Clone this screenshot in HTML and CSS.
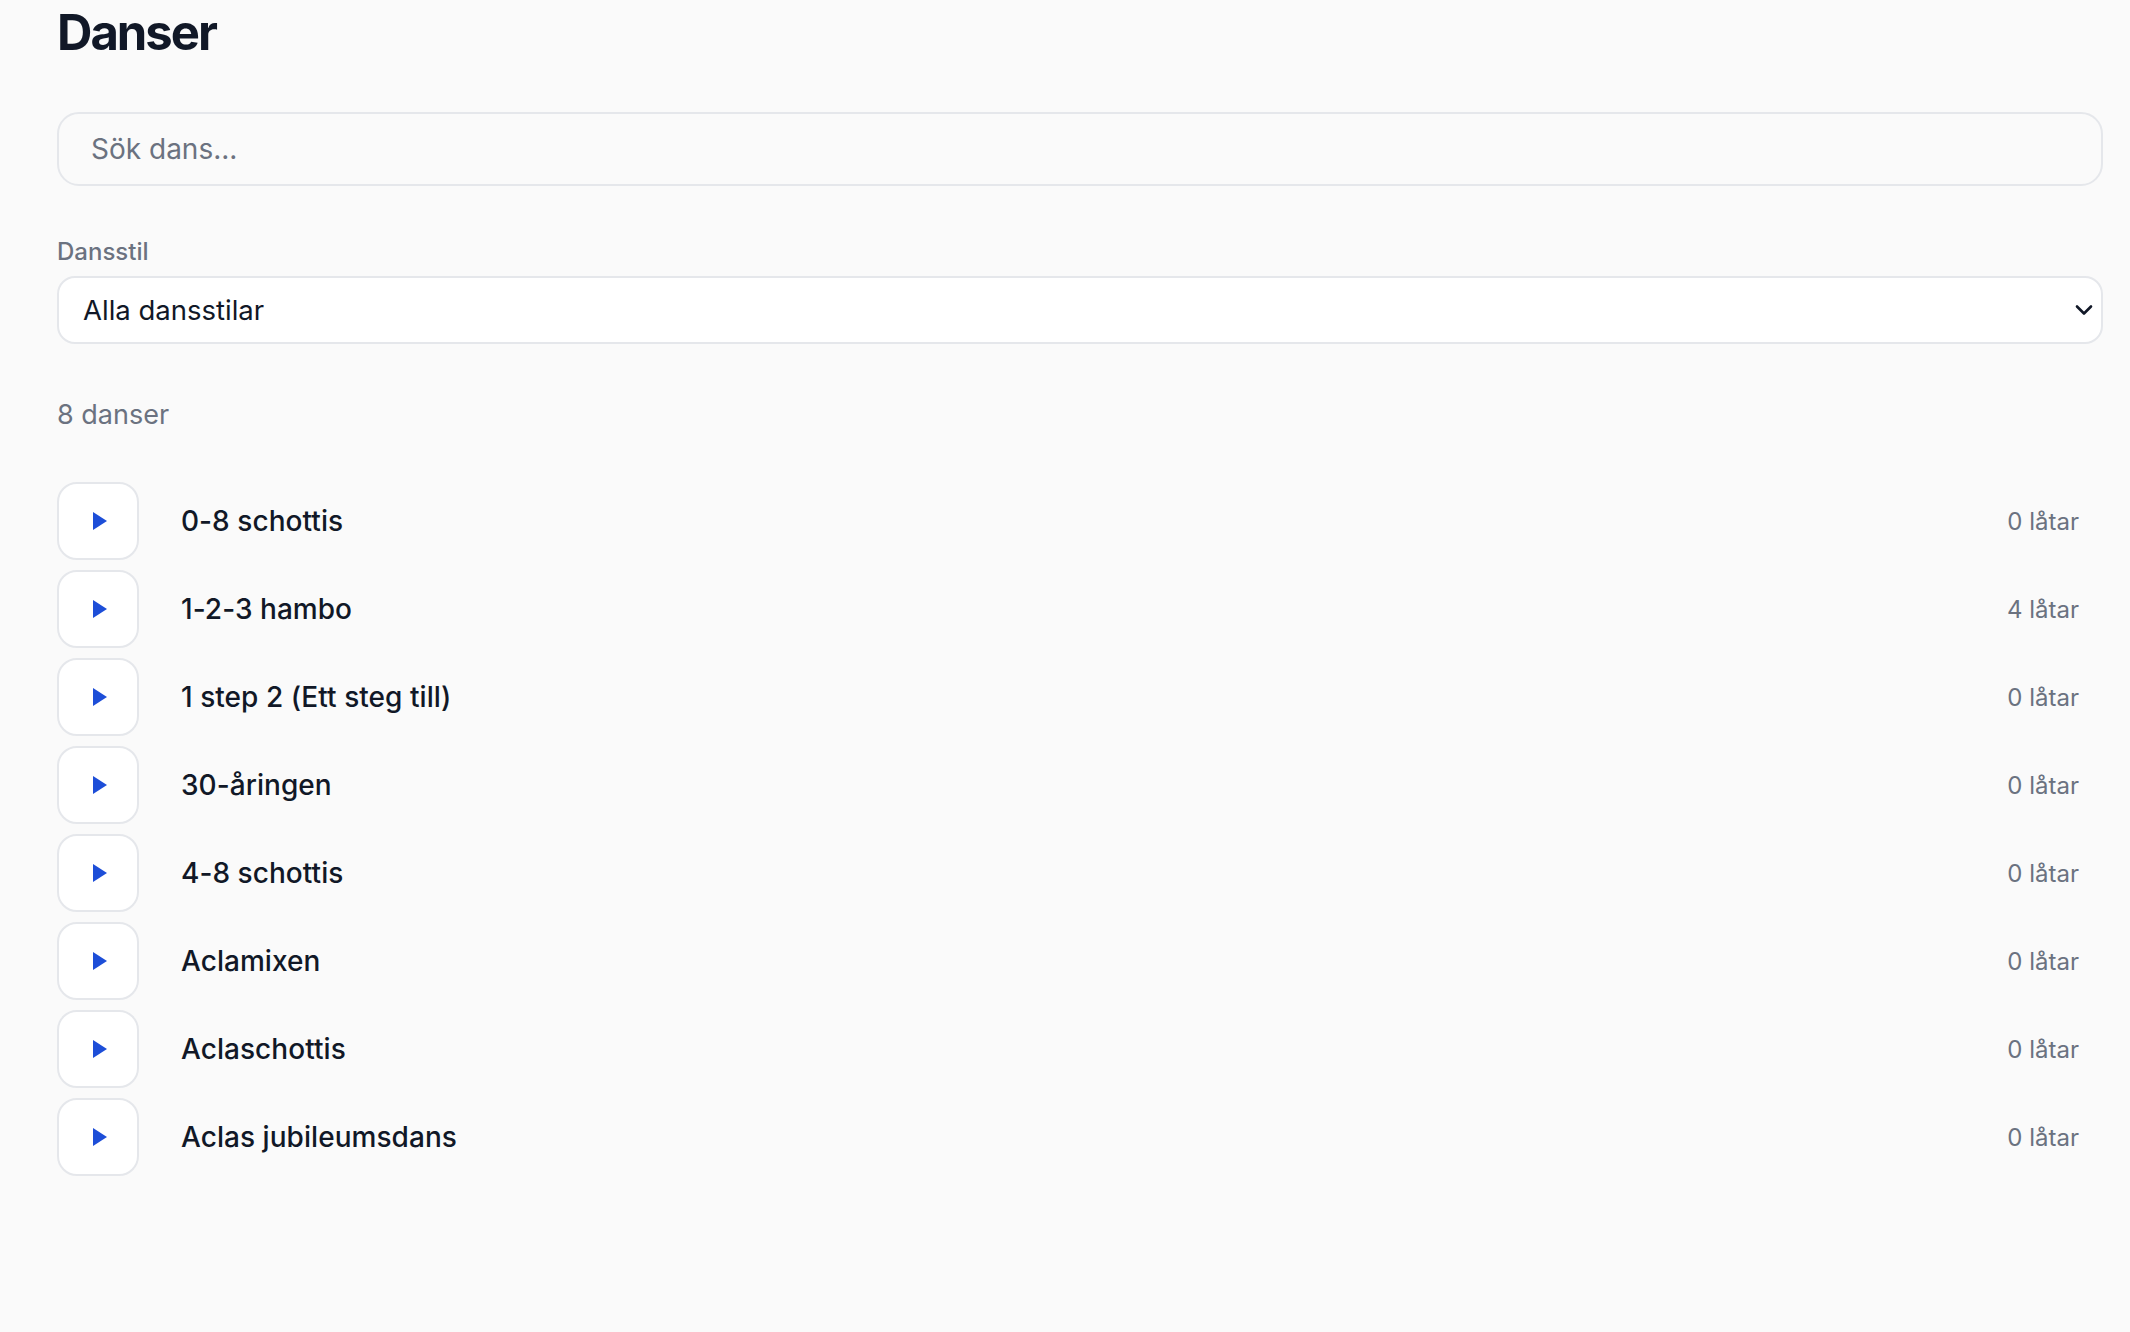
FILE: index.html
```html
<!DOCTYPE html>
<html lang="sv">
<head>
    <meta charset="UTF-8">
    <meta name="viewport" content="width=device-width, initial-scale=1.0">
    <title>Danser</title>
    <link rel="stylesheet" href="styles.css">
</head>
<body>
    <div class="page">
        <h1>Danser</h1>

        <input class="search" type="text" placeholder="Sök dans...">

        <label class="field-label" for="styleSelect">Dansstil</label>
        <div class="select-wrap">
            <select id="styleSelect" class="select">
                <option>Alla dansstilar</option>
            </select>
            <svg class="chevron" width="18" height="12" viewBox="0 0 18 12">
                <path d="M2 2.5 L9 9.5 L16 2.5" fill="none" stroke="#111827" stroke-width="2.6" stroke-linecap="round" stroke-linejoin="round"/>
            </svg>
        </div>

        <p class="count">8 danser</p>

        <ul class="dance-list">
            <li class="dance">
                <button class="play"><svg width="14" height="18" viewBox="0 0 14 18"><path d="M0 0 L14 9 L0 18 Z"/></svg></button>
                <span class="name">0-8 schottis</span>
                <span class="tunes">0 låtar</span>
            </li>
            <li class="dance">
                <button class="play"><svg width="14" height="18" viewBox="0 0 14 18"><path d="M0 0 L14 9 L0 18 Z"/></svg></button>
                <span class="name">1-2-3 hambo</span>
                <span class="tunes">4 låtar</span>
            </li>
            <li class="dance">
                <button class="play"><svg width="14" height="18" viewBox="0 0 14 18"><path d="M0 0 L14 9 L0 18 Z"/></svg></button>
                <span class="name">1 step 2 (Ett steg till)</span>
                <span class="tunes">0 låtar</span>
            </li>
            <li class="dance">
                <button class="play"><svg width="14" height="18" viewBox="0 0 14 18"><path d="M0 0 L14 9 L0 18 Z"/></svg></button>
                <span class="name">30-åringen</span>
                <span class="tunes">0 låtar</span>
            </li>
            <li class="dance">
                <button class="play"><svg width="14" height="18" viewBox="0 0 14 18"><path d="M0 0 L14 9 L0 18 Z"/></svg></button>
                <span class="name">4-8 schottis</span>
                <span class="tunes">0 låtar</span>
            </li>
            <li class="dance">
                <button class="play"><svg width="14" height="18" viewBox="0 0 14 18"><path d="M0 0 L14 9 L0 18 Z"/></svg></button>
                <span class="name">Aclamixen</span>
                <span class="tunes">0 låtar</span>
            </li>
            <li class="dance">
                <button class="play"><svg width="14" height="18" viewBox="0 0 14 18"><path d="M0 0 L14 9 L0 18 Z"/></svg></button>
                <span class="name">Aclaschottis</span>
                <span class="tunes">0 låtar</span>
            </li>
            <li class="dance">
                <button class="play"><svg width="14" height="18" viewBox="0 0 14 18"><path d="M0 0 L14 9 L0 18 Z"/></svg></button>
                <span class="name">Aclas jubileumsdans</span>
                <span class="tunes">0 låtar</span>
            </li>
        </ul>
    </div>
</body>
</html>
```

FILE: styles.css
```css
body {
    margin: 0;
    font-family: Inter, "Noto Sans", sans-serif;
    background-color: #fafafa;
    color: #111827;
}
.page {
    padding: 2px 27px 40px 57px;
}
h1 {
    margin: 0;
    font-size: 49px;
    font-weight: 700;
    line-height: 61px;
    letter-spacing: -2px;
    color: #111827;
}
.search {
    display: block;
    box-sizing: border-box;
    width: 100%;
    height: 74px;
    margin-top: 49px;
    padding: 0 32px;
    font-family: inherit;
    font-size: 28px;
    color: #111827;
    background: #fafafa;
    border: 2px solid #e5e7eb;
    border-radius: 22px;
    outline: none;
}
.search::placeholder {
    color: #6b7280;
}
.field-label {
    display: block;
    margin-top: 48px;
    font-size: 24px;
    font-weight: 500;
    line-height: 36px;
    color: #6b7280;
}
.select-wrap {
    position: relative;
    margin-top: 6px;
}
.select {
    display: block;
    box-sizing: border-box;
    width: 100%;
    height: 68px;
    padding: 0 60px 0 24px;
    font-family: inherit;
    font-size: 27.5px;
    color: #111827;
    background: #fff;
    border: 2px solid #e5e7eb;
    border-radius: 18px;
    appearance: none;
    -webkit-appearance: none;
    outline: none;
}
.chevron {
    position: absolute;
    right: 10px;
    top: 28px;
    pointer-events: none;
}
.count {
    margin: 51px 0 0;
    font-size: 27px;
    line-height: 39px;
    color: #6b7280;
}
.dance-list {
    list-style: none;
    margin: 48px 0 0;
    padding: 0;
    display: flex;
    flex-direction: column;
    gap: 10px;
}
.dance {
    display: flex;
    align-items: center;
    height: 78px;
}
.play {
    box-sizing: border-box;
    width: 82px;
    height: 78px;
    display: flex;
    align-items: center;
    justify-content: center;
    padding: 0 0 0 3px;
    background: #fff;
    border: 2px solid #e5e7eb;
    border-radius: 20px;
    cursor: pointer;
}
.play svg {
    fill: #1d4ed8;
}
.name {
    margin-left: 42px;
    font-size: 28px;
    font-weight: 500;
    letter-spacing: 0.05px;
    color: #111827;
}
.tunes {
    margin-left: auto;
    padding-right: 24px;
    font-size: 24px;
    color: #6b7280;
}
```
